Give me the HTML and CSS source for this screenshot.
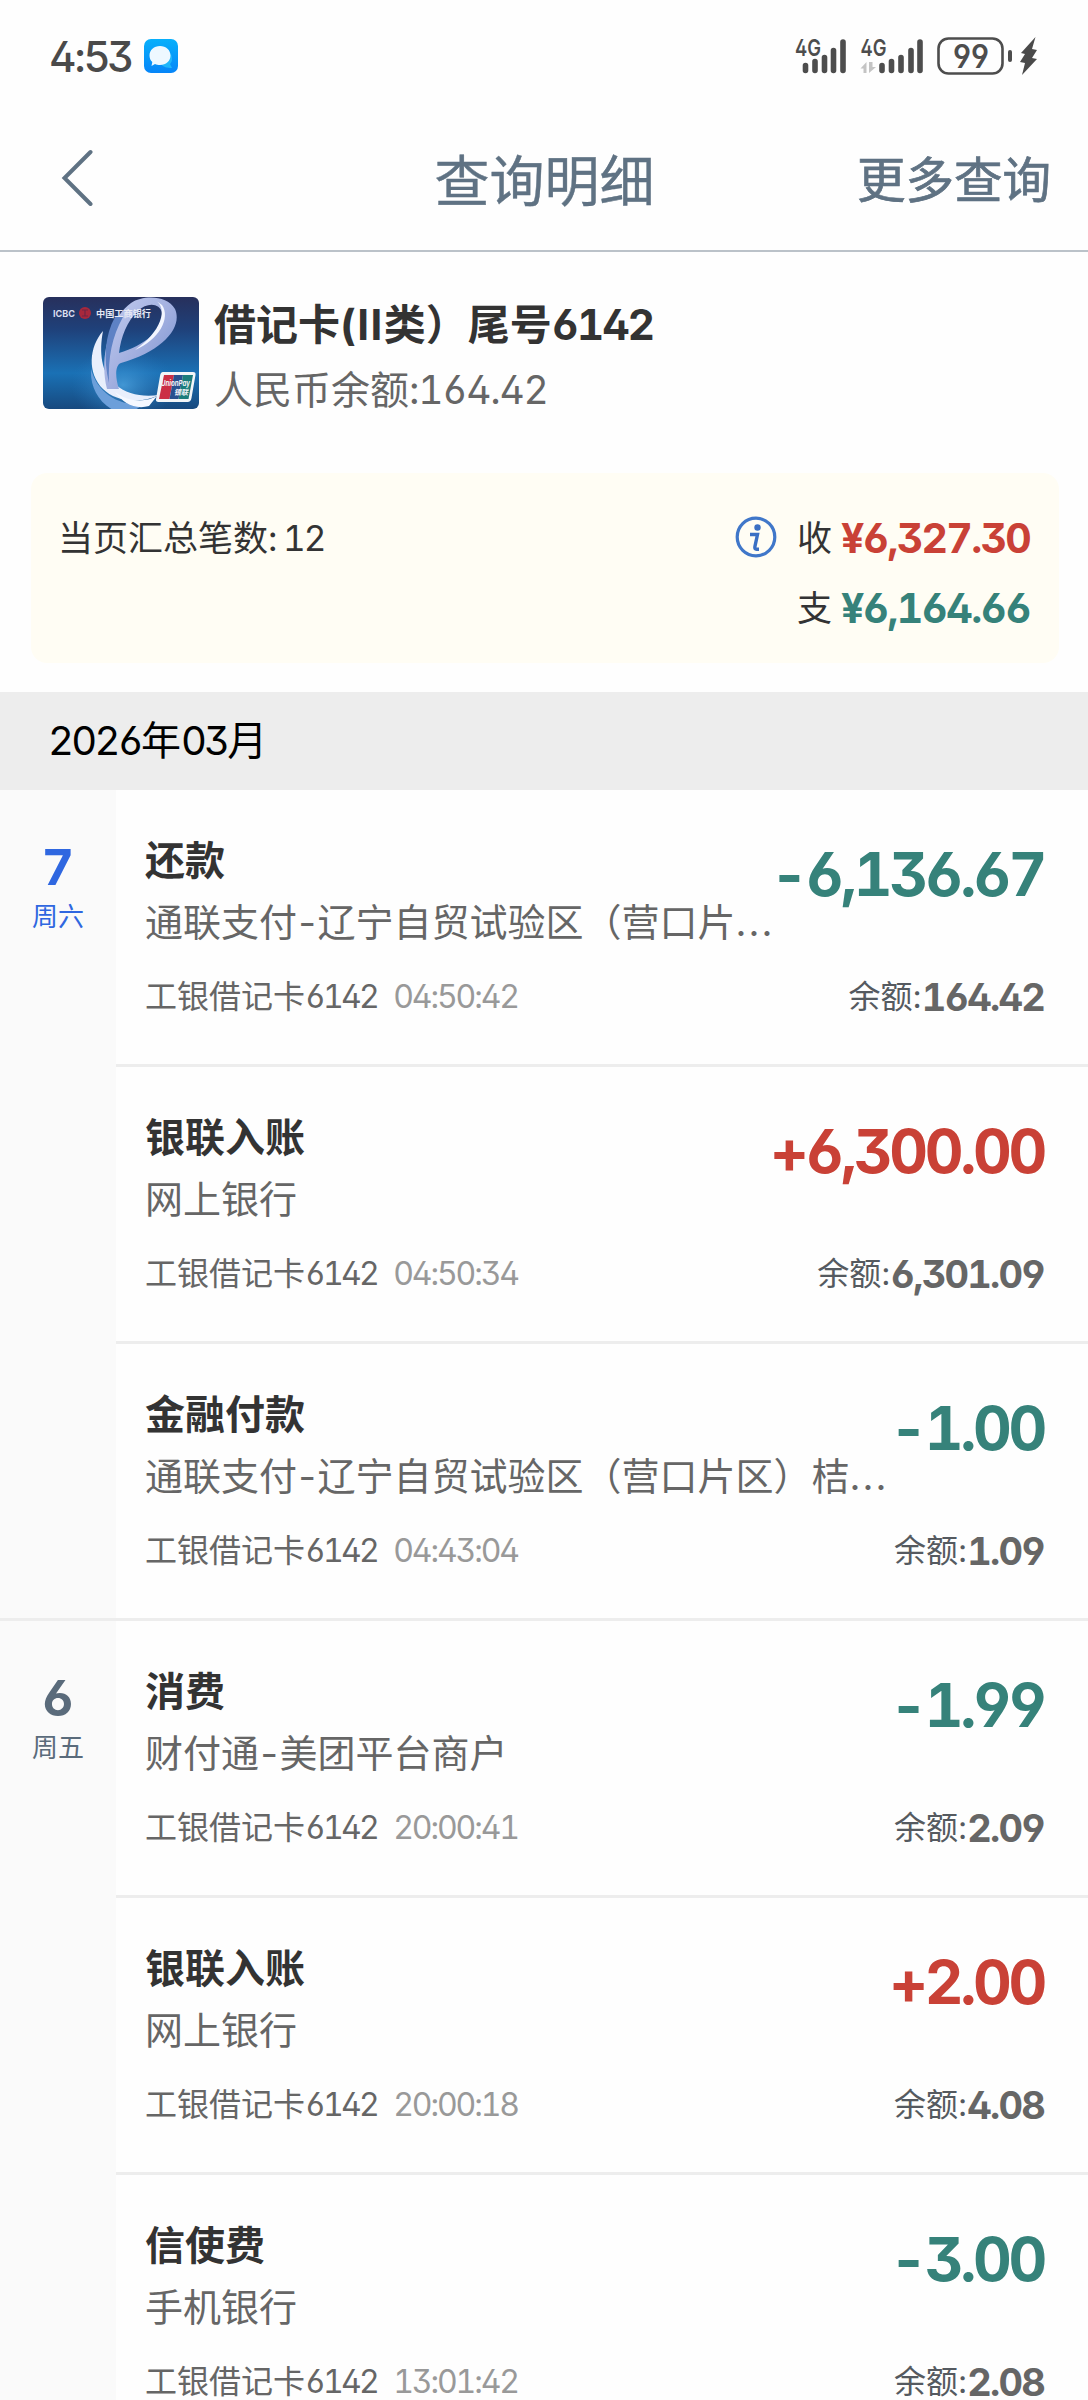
FILE: index.html
```html
<!DOCTYPE html>
<html lang="zh-CN">
<head>
<meta charset="utf-8">
<title>查询明细</title>
<link rel="stylesheet" href="styles.css">
</head>
<body>
<header class="status">
  <span class="clock">4:53</span>
  <svg class="app" width="34" height="34" viewBox="0 0 34 34">
    <defs><linearGradient id="appbg" x1="0" y1="0" x2="0" y2="1"><stop offset="0" stop-color="#08b0fb"/><stop offset="1" stop-color="#0685f8"/></linearGradient></defs>
    <rect width="34" height="34" rx="7" fill="url(#appbg)"/>
    <path d="M27 15c2 5 1 8-1 10l2 4c-5 0-9-1-11-4z" fill="#1fb6fa"/>
    <path d="M16 7c6 0 10.500 4 10.500 9.500S22 26 16 26c-2 0-3.500-.3-5-1l-3.500 2 .8-4C6.500 21.500 5.500 19 5.500 16.500 5.500 11 10 7 16 7z" fill="#eef8ff"/>
  </svg>
  <div class="signals">
    <svg width="54" height="48" viewBox="793 32 54 48">
      <text class="net" x="795" y="56" textLength="26" lengthAdjust="spacingAndGlyphs">4G</text>
      <path class="bar" d="M805.500 65.500V70.500M815 61.500V70.500M824.500 57.500V70.500M833.500 50.500V70.500M843 42V70.500"/>
    </svg>
    <svg class="sim2" width="66" height="48" viewBox="858 32 66 48">
      <text class="net" x="860.500" y="56" textLength="26" lengthAdjust="spacingAndGlyphs">4G</text>
      <path d="M866.500 73V62l-6 6.500h3V73zM869 62v11l7-6h-3.500v-5z" fill="#c4c4c4"/>
      <path class="bar" d="M882 65.500V70.500M891.500 61.500V70.500M901 57.500V70.500M911 50.500V70.500M920 42V70.500"/>
    </svg>
    <svg class="battery" width="102" height="40" viewBox="936 36 102 40">
      <rect x="938.500" y="38.500" width="64" height="35" rx="10" fill="none" stroke="#4d4d4d" stroke-width="2.600"/>
      <text class="pct" x="953" y="67.500" textLength="36" lengthAdjust="spacingAndGlyphs">99</text>
      <rect x="1008" y="50" width="4" height="12" rx="2" fill="#4d4d4d"/>
      <path d="M1035.500 37L1021 53l4 1-5 8 5 1-3 12 15-16-5-1 5-8-5-1z" fill="#4a4a4a"/>
    </svg>
  </div>
</header>

<nav class="nav">
  <svg class="back" width="34" height="58" viewBox="0 0 34 58"><path d="M30.500 4L4.500 30 30.500 56" fill="none" stroke="#5f7283" stroke-width="4" stroke-linecap="round"/></svg>
  <h1 class="nav-title">查询明细</h1>
  <a class="nav-more">更多查询</a>
</nav>

<section class="account">
  <svg class="card" width="156" height="112" viewBox="0 0 156 112">
    <defs>
      <linearGradient id="cbg" x1="0" y1="0" x2="0" y2="1"><stop offset="0" stop-color="#27305c"/><stop offset=".28" stop-color="#1f4079"/><stop offset=".68" stop-color="#1a71b5"/><stop offset="1" stop-color="#17497f"/></linearGradient>
      <linearGradient id="ribbon" x1="0" y1="0" x2="1" y2="1"><stop offset="0" stop-color="#c3cdf0"/><stop offset=".5" stop-color="#a3b0e0"/><stop offset="1" stop-color="#6f8ccc"/></linearGradient>
      <radialGradient id="glow"><stop offset="0" stop-color="#4ca3e0" stop-opacity=".8"/><stop offset="1" stop-color="#2677bd" stop-opacity="0"/></radialGradient>
      <clipPath id="cclip"><rect width="156" height="112" rx="6"/></clipPath>
    </defs>
    <g clip-path="url(#cclip)">
      <rect width="156" height="112" fill="url(#cbg)"/>
      <ellipse cx="80" cy="88" rx="52" ry="38" fill="url(#glow)"/>
      <path d="M60 34C46 50 44 76 60 92c12 12 36 16 56 6-16 2-32 0-44-11C58 76 56 55 60 34z" fill="#e9effc"/>
      <path d="M48 72c6 22 24 36 52 36l-8 5H70C54 104 47 88 48 72z" fill="#6c9fda"/>
      <path d="M64 92C56 62 66 22 88 6c12-8 36-8 44 6 8 18-12 42-54 54-6 2-6 14-2 26zM76 56c28-8 46-26 43-40C117 6 104 5 95 14 84 24 78 40 76 56z" fill="url(#ribbon)" fill-rule="evenodd"/>
      <path d="M112 3c14 8 6 32-20 50 24-10 36-32 27-45z" fill="#f3f6ff"/>
      <path d="M72 20C62 38 60 62 66 86c-1-26 3-46 14-66z" fill="#5e82c5"/>
      <path d="M72 95c14 11 32 10 42 4l-8 10c-14 4-26-3-34-14z" fill="#f5f8ff"/>
      <text class="card-en" x="10" y="20" textLength="22" lengthAdjust="spacingAndGlyphs">ICBC</text>
      <circle cx="42" cy="16" r="6" fill="#a8283c"/><path d="M39 13h6M39 19h6M42 13v6" stroke="#6f2545" stroke-width="1.200"/>
      <text class="card-cn" x="53" y="20" textLength="55" lengthAdjust="spacingAndGlyphs">中国工商银行</text>
      <path d="M120 75h30q3 0 2.500 3l-4 23q-.6 4-4 4h-29q-3 0-2.500-3l4-23q.6-4 3-4z" fill="#f2f5f8"/>
      <path d="M121 78h10l-4.500 24H116z" fill="#cb2f45"/><path d="M131 78h9l-4.500 24h-9z" fill="#28508e"/><path d="M140 78h10l-4.500 24h-10z" fill="#1b7c7b"/>
      <text class="up" x="118" y="89" textLength="29" lengthAdjust="spacingAndGlyphs">UnionPay</text>
      <text class="up" x="131" y="98" textLength="14" lengthAdjust="spacingAndGlyphs">银联</text>
    </g>
  </svg>
  <div class="account-text">
    <div class="account-name">借记卡<span class="roman">(II</span>类）尾号<span class="n">6142</span></div>
    <div class="account-balance">人民币余额<span class="n">:164.42</span></div>
  </div>
</section>

<section class="summary">
  <div class="count">当页汇总笔数<span class="n">: 12</span></div>
  <div class="totals">
    <div class="total">
      <svg class="info" width="42" height="42" viewBox="0 0 42 42"><circle cx="21" cy="21" r="18.800" fill="none" stroke="#4077c9" stroke-width="3.200"/><circle cx="22.500" cy="11.500" r="3.200" fill="#3a6fc4"/><path d="M15 18.500h7.500l-2.600 12.200q-.5 2.500 1.600 2.500h2.500" fill="none" stroke="#3a6fc4" stroke-width="3.400"/></svg>
      <span>收</span><b class="n red">¥6,327.30</b>
    </div>
    <div class="total"><span>支</span><b class="n green">¥6,164.66</b></div>
  </div>
</section>

<h2 class="month"><span class="n">2026</span>年<span class="n">03</span>月</h2>

<section class="day">
  <div class="date today"><b class="n">7</b><span>周六</span></div>
  <div class="rows">
    <article class="row">
      <div class="main"><div class="what"><h3>还款</h3><p>通联支付<span class="dash">-</span>辽宁自贸试验区（营口片<span class="dots">...</span></p></div><b class="amount n green">-6,136.67</b></div>
      <div class="foot"><span>工银借记卡<span class="n">6142</span></span><time class="n">04:50:42</time><span class="bal">余额:<b class="n">164.42</b></span></div>
    </article>
    <article class="row">
      <div class="main"><div class="what"><h3>银联入账</h3><p>网上银行</p></div><b class="amount n red">+6,300.00</b></div>
      <div class="foot"><span>工银借记卡<span class="n">6142</span></span><time class="n">04:50:34</time><span class="bal">余额:<b class="n">6,301.09</b></span></div>
    </article>
    <article class="row">
      <div class="main"><div class="what"><h3>金融付款</h3><p>通联支付<span class="dash">-</span>辽宁自贸试验区（营口片区）桔<span class="dots">...</span></p></div><b class="amount n green">-1.00</b></div>
      <div class="foot"><span>工银借记卡<span class="n">6142</span></span><time class="n">04:43:04</time><span class="bal">余额:<b class="n">1.09</b></span></div>
    </article>
  </div>
</section>

<section class="day">
  <div class="date"><b class="n">6</b><span>周五</span></div>
  <div class="rows">
    <article class="row">
      <div class="main"><div class="what"><h3>消费</h3><p>财付通<span class="dash">-</span>美团平台商户</p></div><b class="amount n green">-1.99</b></div>
      <div class="foot"><span>工银借记卡<span class="n">6142</span></span><time class="n">20:00:41</time><span class="bal">余额:<b class="n">2.09</b></span></div>
    </article>
    <article class="row">
      <div class="main"><div class="what"><h3>银联入账</h3><p>网上银行</p></div><b class="amount n red">+2.00</b></div>
      <div class="foot"><span>工银借记卡<span class="n">6142</span></span><time class="n">20:00:18</time><span class="bal">余额:<b class="n">4.08</b></span></div>
    </article>
    <article class="row">
      <div class="main"><div class="what"><h3>信使费</h3><p>手机银行</p></div><b class="amount n green">-3.00</b></div>
      <div class="foot"><span>工银借记卡<span class="n">6142</span></span><time class="n">13:01:42</time><span class="bal">余额:<b class="n">2.08</b></span></div>
    </article>
  </div>
</section>
</body>
</html>
```
FILE: styles.css
```css
* { box-sizing: border-box; margin: 0; padding: 0; }
body {
  width: 1088px;
  height: 2400px;
  overflow: hidden;
  background: #fefefe;
  color: #333;
  font-family: Inter, "Noto Sans CJK SC", sans-serif;
  font-feature-settings: "cv03", "cv04", "ss01";
}
.n { letter-spacing: -0.055em; white-space: pre; font-feature-settings: "cv03", "cv04", "ss01", "tnum"; }
.red { color: #c94136; }
.green { color: #36827a; }

.status { display: flex; align-items: center; height: 112px; padding: 0 50px 0 49px; }
.clock { width: 95px; font-size: 42px; font-weight: 500; letter-spacing: -0.065em; color: #4a4a4a; }
.signals { display: flex; align-items: center; margin-left: auto; }
.sim2 { margin-left: 11px; }
.battery { margin-left: 12px; }
.net { font-size: 23px; font-weight: 600; fill: #4d4d4d; }
.bar { fill: none; stroke: #4d4d4d; stroke-width: 5.6px; stroke-linecap: round; }
.pct { font-size: 32px; font-weight: 600; fill: #4d4d4d; }

.nav {
  display: grid;
  grid-template-columns: 1fr auto 1fr;
  align-items: center;
  height: 140px;
  padding: 0 37px 8px 60px;
  border-bottom: 2px solid #bbc2c9;
  color: #5f7283;
}
.nav-title { margin-left: -22px; font-size: 55px; font-weight: 400; -webkit-text-stroke: 0.4px #5f7283; }
.nav-more { justify-self: end; font-size: 48.5px; -webkit-text-stroke: 0.7px #5f7283; }

.account { display: flex; gap: 15px; height: 221px; padding: 45px 43px 0; }
.account-text { padding-top: 3px; }
.account-name { line-height: 50px; font-size: 42px; font-weight: 700; }
.roman { letter-spacing: 0.035em; }
.account-name .n { letter-spacing: -0.045em; }
.account-balance { margin-top: 15px; line-height: 50px; font-size: 39px; color: #666; }
.account-balance .n { letter-spacing: -0.033em; }
.card-en { font-size: 9px; font-weight: 700; fill: #d9deee; }
.card-cn { font-size: 9px; font-weight: 700; fill: #e6e9f5; }
.up { font-size: 7.5px; font-weight: 700; font-style: italic; fill: #f1f2f7; }

.summary {
  display: flex;
  justify-content: space-between;
  height: 190px;
  margin: 0 29px 0 31px;
  padding: 30px 29px 0 27px;
  border-radius: 16px;
  background: #fffdf4;
  font-size: 35px;
  line-height: 70px;
}
.totals { display: flex; flex-direction: column; align-items: flex-end; }
.total { display: flex; align-items: center; height: 70px; }
.total b { margin-left: 9px; font-size: 41px; letter-spacing: -0.042em; }
.info { margin: -2px 20px 0 0; }

.month { height: 98px; margin-top: 29px; padding-left: 48px; background: #ededed; color: #000; font-size: 40px; font-weight: 400; line-height: 98px; }
.month .n { letter-spacing: -0.068em; }

.day { display: flex; }
.date {
  display: flex;
  flex: none;
  flex-direction: column;
  align-items: center;
  width: 116px;
  padding-top: 47px;
  background: #fafafa;
  color: #5a6b7b;
  font-size: 26px;
  border-bottom: 3px solid #ededed;
}
.date b { font-size: 50px; line-height: 60px; letter-spacing: 0; }
.date span { line-height: 40px; }
.date.today { color: #2f67e0; }
.rows { flex: 1; min-width: 0; }
.row { height: 277px; padding: 46px 44px 0 29px; border-bottom: 3px solid #ededed; }
.main { display: flex; justify-content: space-between; white-space: nowrap; }
.what { min-width: 0; }
.row h3 { font-size: 40px; line-height: 50px; }
.row p { margin-top: 11px; font-size: 38px; line-height: 50px; color: #666; }
.dash { margin: 0 1.5px; }
.dots { letter-spacing: 2px; }
.amount { font-size: 60px; line-height: 76px; }
.foot { display: flex; align-items: center; height: 40px; margin-top: 30px; font-size: 32px; line-height: 40px; color: #666; }
.foot .n { letter-spacing: -0.085em; }
.foot time.n { margin-left: 16px; color: #999; letter-spacing: -0.066em; }
.bal { display: flex; align-items: center; margin-left: auto; color: #555a60; }
.bal b.n { font-size: 38px; color: #666; letter-spacing: -0.047em; }
```
